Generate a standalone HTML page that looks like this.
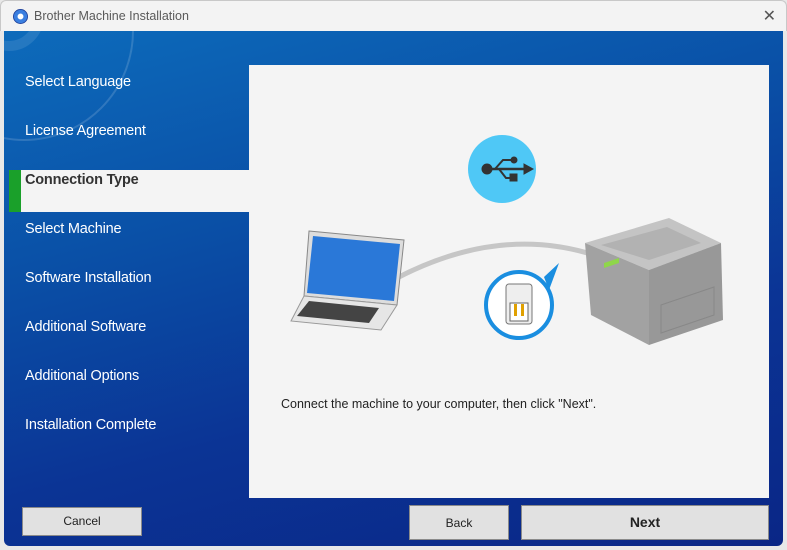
<!DOCTYPE html>
<html><head><style>
*{margin:0;padding:0;box-sizing:border-box}
body{width:787px;height:550px;background:#e8e8e8;font-family:"Liberation Sans",sans-serif;position:relative;overflow:hidden}
.title{position:absolute;left:0;top:0;width:787px;height:31px;background:#f3f3f3;border:1px solid #c8c8c8;border-bottom:none;border-radius:6px 6px 0 0}
.title span{position:absolute;left:33px;top:8px;font-size:12.5px;color:#5a5a5a}
.ico{position:absolute;left:12px;top:8px;width:15px;height:15px;border-radius:50%;background:radial-gradient(circle at 50% 50%,#fff 0 25%,#3a7fe0 30% 60%,#1d3f9a 65%)}
.x{position:absolute;right:10px;top:5px;font-size:16px;color:#555}
.main{position:absolute;left:4px;top:31px;width:779px;height:515px;border-radius:0 0 6px 6px;background:linear-gradient(165deg,#0d6bbb 0%,#0a4fa6 35%,#0b3495 65%,#0a2686 100%);overflow:hidden}
.circ{position:absolute;left:-90px;top:-110px;width:220px;height:220px;border-radius:50%;border:2px solid rgba(255,255,255,.15)}
.circ2{position:absolute;left:-30px;top:-50px;width:70px;height:70px;border-radius:50%;border:10px solid rgba(255,255,255,.1)}
.nav{position:absolute;left:25px;color:#fff;font-size:14.5px;letter-spacing:-0.2px}
.sel{position:absolute;left:9px;top:170px;width:240px;height:42px;background:#f4f4f4}
.sel i{position:absolute;left:0;top:0;width:12px;height:42px;background:#1aa02a}
.sel b{position:absolute;left:16px;top:2px;font-size:14.5px;color:#333;letter-spacing:-0.2px}
.panel{position:absolute;left:249px;top:65px;width:520px;height:433px;background:#f4f4f4}
.btn{position:absolute;background:#e1e1e1;border:1px solid #8a8a8a;font-size:12px;color:#222;text-align:center}
</style></head><body>
<div class="title"><div class="ico"></div><span>Brother Machine Installation</span><div class="x">✕</div></div>
<div class="main"><div class="circ"></div><div class="circ2"></div></div>
<div class="nav" style="top:74px">Select Language</div>
<div class="nav" style="top:123px">License Agreement</div>
<div class="sel"><i></i><b>Connection Type</b></div>
<div class="nav" style="top:221px">Select Machine</div>
<div class="nav" style="top:270px">Software Installation</div>
<div class="nav" style="top:319px">Additional Software</div>
<div class="nav" style="top:368px">Additional Options</div>
<div class="nav" style="top:417px">Installation Complete</div>
<div class="panel">
<svg width="520" height="433" style="position:absolute;left:0;top:0">
<path d="M148 213 Q250 160 345 190" stroke="#c6c6c6" stroke-width="5" fill="none"/>
<circle cx="253" cy="104" r="34" fill="#4fc8f6"/>
<g fill="#333" stroke="#333"><circle cx="238" cy="104" r="5"/><line x1="238" y1="104" x2="275" y2="104" stroke-width="2.5"/><path d="M275 99 L284 104 L275 109Z"/><path d="M246 104 L254 95 L262 95" fill="none" stroke-width="2"/><circle cx="265" cy="95" r="3"/><path d="M250 104 L257 113 L262 113" fill="none" stroke-width="2"/><rect x="261" y="109" width="7" height="7"/></g>
<circle cx="270" cy="240" r="33" fill="#fff" stroke="#1a8ee0" stroke-width="4"/>
<path d="M295 212 L310 198 L300 225Z" fill="#1a8ee0"/>
<rect x="257" y="219" width="26" height="40" rx="3" fill="#eee" stroke="#777"/>
<rect x="261" y="238" width="18" height="18" fill="#fff" stroke="#666"/>
<rect x="265" y="239" width="3" height="12" fill="#e0a000"/><rect x="272" y="239" width="3" height="12" fill="#e0a000"/>
<path d="M60 166 L155 175 L148 240 L55 231Z" fill="#ddd" stroke="#888"/>
<path d="M64 171 L151 179 L145 236 L58 228Z" fill="#2a78d8"/>
<path d="M55 231 L148 240 L132 265 L42 256Z" fill="#e6e6e6" stroke="#999"/>
<path d="M60 236 L130 243 L120 258 L48 251Z" fill="#444"/>
<path d="M336 178 L420 153 L472 178 L400 205Z" fill="#c4c4c4"/>
<path d="M352 180 L418 162 L452 178 L400 195Z" fill="#b2b2b2"/>
<path d="M336 178 L400 205 L400 280 L342 250Z" fill="#a2a2a2"/>
<path d="M400 205 L472 178 L474 255 L400 280Z" fill="#989898"/>
<path d="M412 240 L465 222 L465 250 L412 268Z" fill="none" stroke="#888"/>
<path d="M355 198 L370 193 L370 198 L355 203Z" fill="#8fd64a"/>
</svg>
<div style="position:absolute;left:32px;top:332px;font-size:12.5px;color:#222">Connect the machine to your computer, then click "Next".</div>
</div>
<div class="btn" style="left:22px;top:507px;width:120px;height:29px;line-height:27px">Cancel</div>
<div class="btn" style="left:409px;top:505px;width:100px;height:35px;line-height:35px">Back</div>
<div class="btn" style="left:521px;top:505px;width:248px;height:35px;line-height:33px;font-size:14px;font-weight:bold">Next</div>
</body></html>
